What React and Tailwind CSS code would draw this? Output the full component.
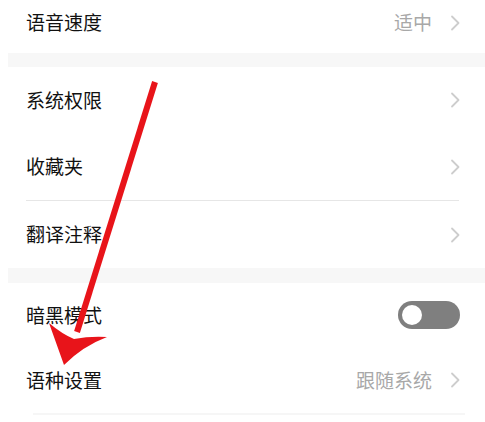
import React from 'react';

const Chevron = () => (
  <svg width="10" height="16" viewBox="0 0 10 16" className="shrink-0">
    <path d="M2 1.5 L8.5 8 L2 14.5" fill="none" stroke="#cdcdcd" strokeWidth="1.8" strokeLinecap="round" strokeLinejoin="round" />
  </svg>
);

const Row = ({ label, value, chevron = true, toggle, className = '' }) => (
  <div className={`flex items-center justify-between pl-[26px] pr-[25px] ${className}`}>
    <span className="text-[19px] text-[#111]">{label}</span>
    <div className="flex items-center gap-[18px]">
      {value && <span className="text-[19px] text-[#a8a8a8]">{value}</span>}
      {toggle && (
        <div className="w-[62px] h-[28px] rounded-full bg-[#7f7f7f] flex items-center pl-[4px]">
          <div className="w-[20px] h-[20px] rounded-full bg-white" />
        </div>
      )}
      {chevron && <Chevron />}
    </div>
  </div>
);

export default function App() {
  return (
    <div className="relative w-[485px] h-[422px] bg-white overflow-hidden" style={{ fontFamily: '"Noto Sans CJK SC", "Noto Sans", sans-serif' }}>
      <Row label="语音速度" value="适中" className="h-[53px] pb-[8px]" />
      <div className="h-[14px] ml-[8px] bg-[#f7f7f7]" />
      <Row label="系统权限" className="h-[66px]" />
      <Row label="收藏夹" className="h-[67px]" />
      <div className="h-px mx-[26px] bg-[#e6e6e6]" />
      <Row label="翻译注释" className="h-[67px]" />
      <div className="h-[15px] ml-[8px] bg-[#f7f7f7]" />
      <Row label="暗黑模式" chevron={false} toggle className="h-[64px]" />
      <Row label="语种设置" value="跟随系统" className="h-[66px]" />
      <div className="h-[2px] ml-[33px] mr-[20px] bg-[#f6f6f6]" />

      <svg className="absolute inset-0 pointer-events-none" width="485" height="422" viewBox="0 0 485 422">
        <path d="M155 82 L77 332" stroke="#e8141a" strokeWidth="6" strokeLinecap="butt" fill="none" />
        <path d="M64 365 L49 323 Q62 334 74 339 Q90 336 107 337 Q83 346 64 365 Z" fill="#e8141a" />
      </svg>
    </div>
  );
}
